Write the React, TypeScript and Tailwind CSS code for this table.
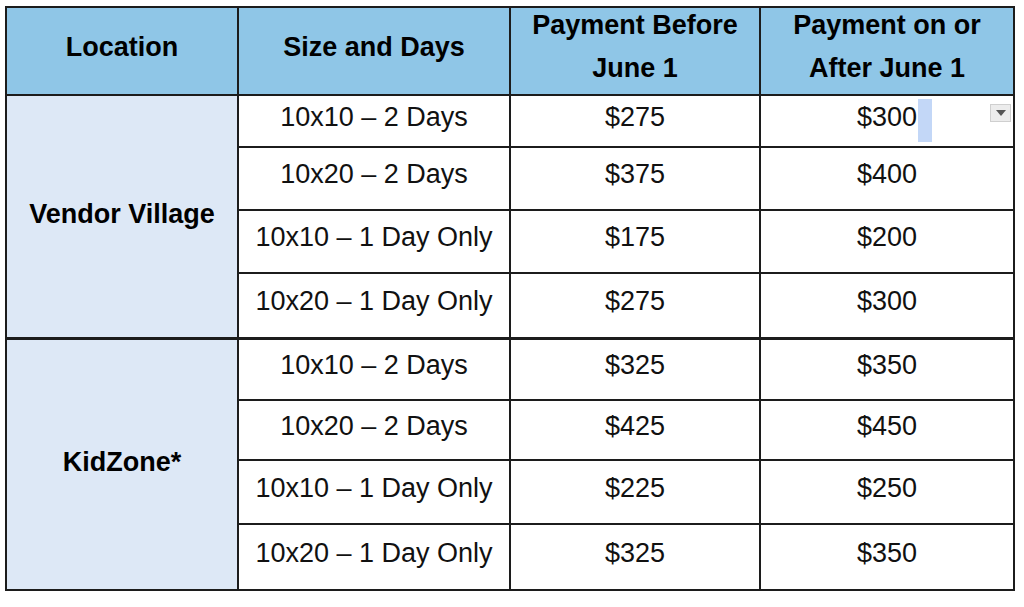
import React from "react";

const rows = [
  { size: "10x10 – 2 Days", before: "$275", after: "$300", h: "h-[52px]" },
  { size: "10x20 – 2 Days", before: "$375", after: "$400", h: "h-[63px]" },
  { size: "10x10 – 1 Day Only", before: "$175", after: "$200", h: "h-[63px]" },
  { size: "10x20 – 1 Day Only", before: "$275", after: "$300", h: "h-[65px]" },
  { size: "10x10 – 2 Days", before: "$325", after: "$350", h: "h-[62px]" },
  { size: "10x20 – 2 Days", before: "$425", after: "$450", h: "h-[60px]" },
  { size: "10x10 – 1 Day Only", before: "$225", after: "$250", h: "h-[64px]" },
  { size: "10x20 – 1 Day Only", before: "$325", after: "$350", h: "h-[66px]" },
];

const cell = "border-2 border-[#1c1c1c] text-center align-middle p-0";

export default function App() {
  return (
    <div
      className="w-[1024px] h-[607px] bg-white pl-[5px] pt-[6px] text-[27px] text-[#111]"
      style={{ fontFamily: '"Liberation Sans", Arial, sans-serif' }}
    >
      <table className="table-fixed border-collapse w-[1008px]">
        <colgroup>
          <col className="w-[232px]" />
          <col className="w-[272px]" />
          <col className="w-[250px]" />
          <col className="w-[254px]" />
        </colgroup>
        <thead>
          <tr className="h-[88px] bg-[#8fc6e7] font-bold leading-[43px] text-black">
            <th className={cell}>
              <div className="-translate-y-[4px]">Location</div>
            </th>
            <th className={cell}>
              <div className="-translate-y-[4px]">Size and Days</div>
            </th>
            <th className={cell}>
              <div className="-translate-y-[4px]">
                Payment Before
                <br />
                June 1
              </div>
            </th>
            <th className={cell}>
              <div className="-translate-y-[4px]">
                Payment on or
                <br />
                After June 1
              </div>
            </th>
          </tr>
        </thead>
        <tbody className="leading-[36px]">
          {rows.map((r, i) => {
            const sep = i === 4 ? "border-t-[3px]" : "";
            return (
              <tr key={i} className={r.h}>
                {i % 4 === 0 && (
                  <td rowSpan={4} className={`${cell} ${sep} pb-[5px] bg-[#dde8f6] font-bold text-black`}>
                    {i === 0 ? "Vendor Village" : "KidZone*"}
                  </td>
                )}
                <td className={`${cell} ${sep} pb-[9px]`}>{r.size}</td>
                <td className={`${cell} ${sep} pb-[9px]`}>{r.before}</td>
                <td className={`${cell} ${sep} pb-[9px] relative`}>
                  {r.after}
                  {i === 0 && (
                    <>
                      <span className="absolute left-[157px] top-[3px] w-[14px] h-[43px] bg-[#c3d7f7]" />
                      <span className="absolute right-[2px] top-[8px] w-[21px] h-[18px] bg-[#ececec] border border-[#cfcfcf] flex items-center justify-center">
                        <svg width="10" height="6" viewBox="0 0 10 6">
                          <path d="M0 0 L10 0 L5 6 Z" fill="#555" />
                        </svg>
                      </span>
                    </>
                  )}
                </td>
              </tr>
            );
          })}
        </tbody>
      </table>
    </div>
  );
}
